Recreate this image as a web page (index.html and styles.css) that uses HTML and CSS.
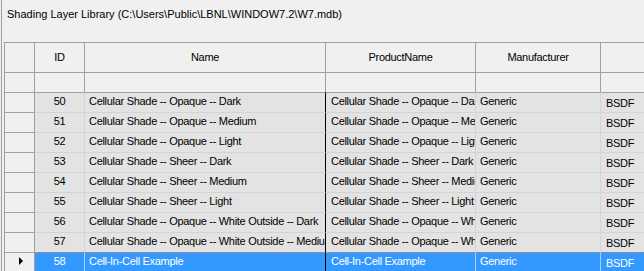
FILE: index.html
```html
<!DOCTYPE html>
<html lang="en">
<head>
    <meta charset="UTF-8">
    <title>Shading Layer Library</title>
    <link rel="stylesheet" href="styles.css">
</head>
<body>
    <div class="frame">
        <div class="caption">Shading Layer Library (C:\Users\Public\LBNL\WINDOW7.2\W7.mdb)</div>
        <div class="grid">
            <div class="row head">
                <div class="cell rh"></div>
                <div class="cell id">ID</div>
                <div class="cell name">Name</div>
                <div class="cell product">ProductName</div>
                <div class="cell maker">Manufacturer</div>
                <div class="cell type"></div>
            </div>
            <div class="row filter">
                <div class="cell rh"></div>
                <div class="cell id"></div>
                <div class="cell name"></div>
                <div class="cell product"></div>
                <div class="cell maker"></div>
                <div class="cell type"></div>
            </div>
            <div class="row data first">
                <div class="cell rh"></div>
                <div class="cell id">50</div>
                <div class="cell name">Cellular Shade -- Opaque -- Dark</div>
                <div class="cell product">Cellular Shade -- Opaque -- Dark</div>
                <div class="cell maker">Generic</div>
                <div class="cell type">BSDF</div>
            </div>
            <div class="row data">
                <div class="cell rh"></div>
                <div class="cell id">51</div>
                <div class="cell name">Cellular Shade -- Opaque -- Medium</div>
                <div class="cell product">Cellular Shade -- Opaque -- Medium</div>
                <div class="cell maker">Generic</div>
                <div class="cell type">BSDF</div>
            </div>
            <div class="row data">
                <div class="cell rh"></div>
                <div class="cell id">52</div>
                <div class="cell name">Cellular Shade -- Opaque -- Light</div>
                <div class="cell product">Cellular Shade -- Opaque -- Light</div>
                <div class="cell maker">Generic</div>
                <div class="cell type">BSDF</div>
            </div>
            <div class="row data">
                <div class="cell rh"></div>
                <div class="cell id">53</div>
                <div class="cell name">Cellular Shade -- Sheer -- Dark</div>
                <div class="cell product">Cellular Shade -- Sheer -- Dark</div>
                <div class="cell maker">Generic</div>
                <div class="cell type">BSDF</div>
            </div>
            <div class="row data">
                <div class="cell rh"></div>
                <div class="cell id">54</div>
                <div class="cell name">Cellular Shade -- Sheer -- Medium</div>
                <div class="cell product">Cellular Shade -- Sheer -- Medium</div>
                <div class="cell maker">Generic</div>
                <div class="cell type">BSDF</div>
            </div>
            <div class="row data">
                <div class="cell rh"></div>
                <div class="cell id">55</div>
                <div class="cell name">Cellular Shade -- Sheer -- Light</div>
                <div class="cell product">Cellular Shade -- Sheer -- Light</div>
                <div class="cell maker">Generic</div>
                <div class="cell type">BSDF</div>
            </div>
            <div class="row data">
                <div class="cell rh"></div>
                <div class="cell id">56</div>
                <div class="cell name">Cellular Shade -- Opaque -- White Outside -- Dark</div>
                <div class="cell product">Cellular Shade -- Opaque -- White Outside -- Dark</div>
                <div class="cell maker">Generic</div>
                <div class="cell type">BSDF</div>
            </div>
            <div class="row data">
                <div class="cell rh"></div>
                <div class="cell id">57</div>
                <div class="cell name">Cellular Shade -- Opaque -- White Outside -- Medium</div>
                <div class="cell product">Cellular Shade -- Opaque -- White Outside -- Medium</div>
                <div class="cell maker">Generic</div>
                <div class="cell type">BSDF</div>
            </div>
            <div class="row data selected">
                <div class="cell rh"><span class="pointer"></span></div>
                <div class="cell id">58</div>
                <div class="cell name">Cell-In-Cell Example</div>
                <div class="cell product">Cell-In-Cell Example</div>
                <div class="cell maker">Generic</div>
                <div class="cell type">BSDF</div>
            </div>
        </div>
    </div>
</body>
</html>
```

FILE: styles.css
```css
* {
    box-sizing: border-box;
    margin: 0;
    padding: 0;
}

body {
    font-family: "Liberation Sans", Arial, sans-serif;
    font-size: 11px;
    letter-spacing: -0.3px;
    color: #000;
    background-color: #f0f0f0;
    width: 644px;
    height: 271px;
    overflow: hidden;
}

.frame {
    margin-left: 1px;
    height: 271px;
    border-left: 1px solid #a0a0a0;
    padding-left: 2px;
}

.caption {
    height: 42px;
    padding: 8px 0 0 3px;
    line-height: 13px;
    letter-spacing: 0;
    white-space: nowrap;
}

.grid {
    border-left: 1px solid #a0a0a0;
    width: 700px;
}

.row {
    display: flex;
}

.cell {
    flex: none;
    height: 20px;
    line-height: 17px;
    border-top: 1px solid #a0a0a0;
    border-right: 1px solid #a0a0a0;
    overflow: hidden;
    white-space: nowrap;
}

.rh { width: 30px; }
.id { width: 50px; text-align: center; }
.name { width: 241px; }
.product { width: 150px; }
.maker { width: 125px; }
.type { width: 100px; }

/* header and filter rows */
.head .cell {
    height: 30px;
    line-height: 29px;
    text-align: center;
}

/* data rows */
.data .cell {
    background-color: #e3e3e3;
    border-top-color: #d4d4d4;
    border-right-color: #d4d4d4;
}

.data.first .cell {
    border-top-color: #a0a0a0;
}

.data .rh {
    background-color: #f0f0f0;
    border-top-color: #a0a0a0;
    border-right-color: #a0a0a0;
}

.data .name {
    padding-left: 4px;
    border-right-color: #000;
}

.data .product { padding-left: 5px; }
.data .maker { padding-left: 4px; }

.data .type {
    padding: 2px 0 0 5px;
}

.data.selected .cell {
    background-color: #3399ff;
    color: #fff;
    border-top: 1px dotted #e0803a;
    border-right-color: #a8d0fa;
}

.data.selected .name {
    border-right-color: #000;
}

.data.selected .type {
    border-right-color: #d4d4d4;
}

.data.selected .rh {
    background-color: #f0f0f0;
    border-top: 1px solid #a0a0a0;
    border-right-color: #a0a0a0;
    display: flex;
    align-items: center;
    padding: 0 0 3px 14px;
}

.pointer {
    width: 0;
    height: 0;
    border-top: 4px solid transparent;
    border-bottom: 4px solid transparent;
    border-left: 4px solid #000;
}
```
